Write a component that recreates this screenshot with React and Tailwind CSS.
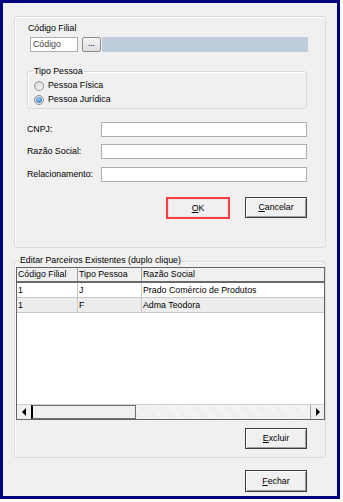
import React from 'react';

const font = "font-['Liberation_Sans',Arial,sans-serif]";

const Radio = ({ checked }) => (
    <span className="w-[10px] h-[10px] rounded-full border border-[#8f8f8f] bg-[linear-gradient(135deg,#d8d8d8,#f8f8f8)] flex items-center justify-center shrink-0">
        {checked && <span className="w-[6px] h-[6px] rounded-full bg-[radial-gradient(circle_at_40%_35%,#8fd0ff,#1f63b0)]" />}
    </span>
);

const WinButton = ({ children, className = '', highlight = false }) => (
    <button
        type="button"
        className={
            'h-[21px] flex items-center justify-center bg-[#f0f0f0] text-black ' +
            (highlight
                ? 'border-2 border-[#ff3b3b] shadow-[inset_0_0_0_1px_#e8e8e8] '
                : 'border border-[#3c3c3c] shadow-[inset_1px_1px_0_#fff,inset_-1px_-1px_0_#a0a0a0] ') +
            className
        }
    >
        {children}
    </button>
);

const Field = ({ label, className = '' }) => (
    <div className={'flex items-center h-[15px] ' + className}>
        <span className="w-[74px]">{label}</span>
        <div className="w-[206px] h-[15px] bg-white border border-[#abadb3]" />
    </div>
);

const rows = [
    { cod: '1', tipo: 'J', razao: 'Prado Comércio de Produtos' },
    { cod: '1', tipo: 'F', razao: 'Adma Teodora' },
];

export default function App() {
    return (
        <div className={'w-[343px] h-[502px] bg-white text-[8.8px] leading-[11px] text-black ' + font}>
            <div className="w-[340px] h-[499px] border-[3px] border-[#00007f] bg-[#f0f0f0] flex flex-col pl-[11px] pt-[13px]">
                {/* top group */}
                <div className="w-[312px] h-[232px] border border-[#d5dbe0] rounded-[3px] shadow-[inset_1px_1px_0_#fff] flex flex-col">
                    <span className="ml-[13px] mt-[6px] h-[11px]">Código Filial</span>
                    <div className="flex ml-[15px] mt-[3px] h-[15px]">
                        <div className="w-[48px] h-[15px] bg-white border border-[#abadb3] pl-[2px] flex items-center text-[#444]">
                            Código
                        </div>
                        <button
                            type="button"
                            className="ml-[4px] w-[19px] h-[15px] border border-[#8a8a8a] rounded-[2px] bg-[linear-gradient(#f6f6f6,#dcdcdc)] flex items-end justify-center text-[8px] leading-none pb-[3px] text-[#4a3a7a] font-bold"
                        >
                            ...
                        </button>
                        <div className="ml-[1px] w-[206px] h-[15px] bg-[#bfcddb]" />
                    </div>

                    <div className="relative ml-[12px] mt-[19px] w-[280px] h-[38px] border border-[#d5dbe0] rounded-[3px] shadow-[inset_1px_1px_0_#fff] flex flex-col pt-[8px] pl-[6px] gap-[3px]">
                        <span className="absolute -top-[6px] left-[5px] px-[1px] bg-[#f0f0f0]">Tipo Pessoa</span>
                        <label className="flex items-center gap-[4px] h-[11px]">
                            <Radio />
                            Pessoa Física
                        </label>
                        <label className="flex items-center gap-[4px] h-[11px]">
                            <Radio checked />
                            Pessoa Jurídica
                        </label>
                    </div>

                    <div className="ml-[12px] flex flex-col">
                        <Field label="CNPJ:" className="mt-[13px]" />
                        <Field label="Razão Social:" className="mt-[7px]" />
                        <Field label="Relacionamento:" className="mt-[8px]" />
                    </div>

                    <div className="flex items-start ml-[151px] mt-[15px] gap-[15px]">
                        <WinButton highlight className="w-[64px] h-[22px]">
                            <span className="underline">O</span>K
                        </WinButton>
                        <WinButton className="w-[62px]">
                            <span className="underline">C</span>ancelar
                        </WinButton>
                    </div>
                </div>

                {/* bottom group */}
                <div className="relative mt-[13px] w-[312px] h-[197px] border border-[#d5dbe0] rounded-[3px] shadow-[inset_1px_1px_0_#fff] flex flex-col">
                    <span className="absolute -top-[7px] left-[4px] px-[1px] bg-[#f0f0f0]">
                        Editar Parceiros Existentes (duplo clique)
                    </span>
                    <div className="ml-[1px] mt-[5px] w-[309px] h-[153px] border border-[#646464] bg-white flex flex-col">
                        <div className="flex h-[15px] bg-[#f0f0f0] border-b-2 border-[#6a6a6a]">
                            <div className="w-[61px] pl-[1px] border-r border-[#a0a0a0] flex items-center">Código Filial</div>
                            <div className="w-[64px] pl-[1px] border-r border-[#a0a0a0] flex items-center">Tipo Pessoa</div>
                            <div className="flex-1 pl-[1px] flex items-center">Razão Social</div>
                        </div>
                        {rows.map((r, i) => (
                            <div
                                key={i}
                                className={
                                    'flex h-[15px] border-b border-[#c8c8c8] ' +
                                    (i === 1 ? 'bg-[#ededed]' : 'bg-white')
                                }
                            >
                                <div className="w-[61px] pl-[1px] border-r border-[#c8c8c8] flex items-center">{r.cod}</div>
                                <div className="w-[64px] pl-[1px] border-r border-[#c8c8c8] flex items-center">{r.tipo}</div>
                                <div className="flex-1 pl-[1px] flex items-center">{r.razao}</div>
                            </div>
                        ))}
                        <div className="flex-1" />
                        <div className="flex h-[15px] border-t border-[#d0d0d0] bg-[#e9e9e9]">
                            <div className="w-[14px] flex items-center justify-center bg-[#f0f0f0]">
                                <svg width="5" height="8" viewBox="0 0 5 8">
                                    <path d="M4 0 L0 4 L4 8 Z" fill="#000" />
                                </svg>
                            </div>
                            <div className="w-[105px] bg-[#f0f0f0] border border-[#707070] border-l-2 border-l-black" />
                            <div className="flex-1 bg-[repeating-linear-gradient(45deg,#ececec_0,#ececec_1px,#f6f6f6_1px,#f6f6f6_2px)]" />
                            <div className="w-[14px] flex items-center justify-center bg-[#f0f0f0] border-l border-[#a0a0a0]">
                                <svg width="5" height="8" viewBox="0 0 5 8">
                                    <path d="M1 0 L5 4 L1 8 Z" fill="#000" />
                                </svg>
                            </div>
                        </div>
                    </div>
                    <div className="flex ml-[230px] mt-[8px]">
                        <WinButton className="w-[62px]">
                            <span className="underline">E</span>xcluir
                        </WinButton>
                    </div>
                </div>

                <div className="flex ml-[231px] mt-[12px]">
                    <WinButton className="w-[62px] h-[22px]">
                        <span className="underline">F</span>echar
                    </WinButton>
                </div>
            </div>
        </div>
    );
}
